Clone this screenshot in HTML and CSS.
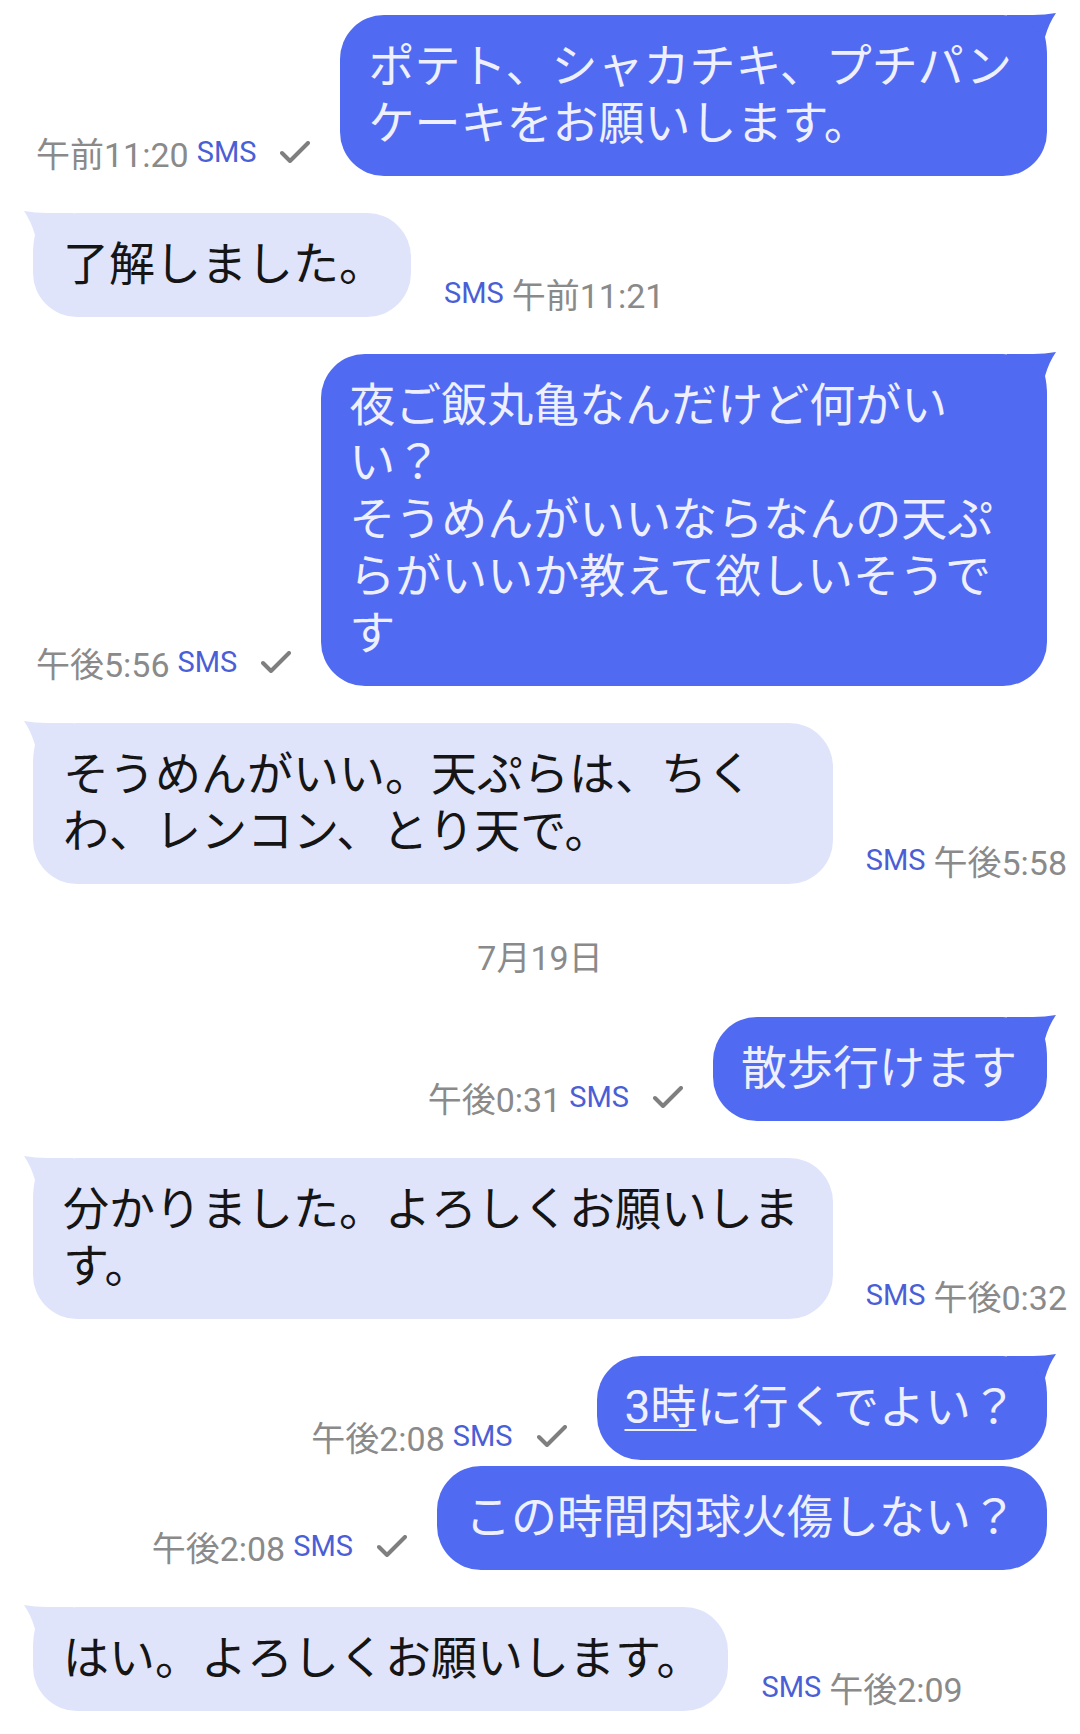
FILE: index.html
```html
<!DOCTYPE html>
<html lang="ja">
<head>
  <meta charset="UTF-8" />
  <meta name="viewport" content="width=device-width, initial-scale=1.0"/>
  <title>SMS</title>
  <link rel="stylesheet" href="styles.css">
</head>
<body>

  <div class="chat">

    <div class="row sent">
      <div class="meta"><span class="time">午前11:20</span> <span class="sms">SMS</span><svg class="check" viewBox="0 0 30 22"><polyline points="2,12 10,20 28,2" /></svg></div>
      <div class="bubble tailed">ポテト、シャカチキ、プチパンケーキをお願いします。<svg class="tail" viewBox="0 0 50 50"><path d="M0,2 L26,2 Q38,2 49,0 Q42,10 38,24 Q40,32 40,44 L40,50 L0,50 Z" /></svg></div>
    </div>

    <div class="row received">
      <div class="bubble tailed">了解しました。<svg class="tail" viewBox="0 0 50 50"><path d="M0,2 L26,2 Q38,2 49,0 Q42,10 38,24 Q40,32 40,44 L40,50 L0,50 Z" /></svg></div>
      <div class="meta"><span class="sms">SMS</span> <span class="time">午前11:21</span></div>
    </div>

    <div class="row sent">
      <div class="meta"><span class="time">午後5:56</span> <span class="sms">SMS</span><svg class="check" viewBox="0 0 30 22"><polyline points="2,12 10,20 28,2" /></svg></div>
      <div class="bubble tailed">夜ご飯丸亀なんだけど何がいい？<br>そうめんがいいならなんの天ぷらがいいか教えて欲しいそうです<svg class="tail" viewBox="0 0 50 50"><path d="M0,2 L26,2 Q38,2 49,0 Q42,10 38,24 Q40,32 40,44 L40,50 L0,50 Z" /></svg></div>
    </div>

    <div class="row received">
      <div class="bubble tailed">そうめんがいい。天ぷらは、ちくわ、レンコン、とり天で。<svg class="tail" viewBox="0 0 50 50"><path d="M0,2 L26,2 Q38,2 49,0 Q42,10 38,24 Q40,32 40,44 L40,50 L0,50 Z" /></svg></div>
      <div class="meta"><span class="sms">SMS</span> <span class="time">午後5:58</span></div>
    </div>

    <div class="date">7月19日</div>

    <div class="row sent">
      <div class="meta"><span class="time">午後0:31</span> <span class="sms">SMS</span><svg class="check" viewBox="0 0 30 22"><polyline points="2,12 10,20 28,2" /></svg></div>
      <div class="bubble tailed">散歩行けます<svg class="tail" viewBox="0 0 50 50"><path d="M0,2 L26,2 Q38,2 49,0 Q42,10 38,24 Q40,32 40,44 L40,50 L0,50 Z" /></svg></div>
    </div>

    <div class="row received">
      <div class="bubble tailed">分かりました。よろしくお願いします。<svg class="tail" viewBox="0 0 50 50"><path d="M0,2 L26,2 Q38,2 49,0 Q42,10 38,24 Q40,32 40,44 L40,50 L0,50 Z" /></svg></div>
      <div class="meta"><span class="sms">SMS</span> <span class="time">午後0:32</span></div>
    </div>

    <div class="row sent has-next">
      <div class="meta"><span class="time">午後2:08</span> <span class="sms">SMS</span><svg class="check" viewBox="0 0 30 22"><polyline points="2,12 10,20 28,2" /></svg></div>
      <div class="bubble tailed"><span class="link">3時</span>に行くでよい？<svg class="tail" viewBox="0 0 50 50"><path d="M0,2 L26,2 Q38,2 49,0 Q42,10 38,24 Q40,32 40,44 L40,50 L0,50 Z" /></svg></div>
    </div>

    <div class="row sent">
      <div class="meta"><span class="time">午後2:08</span> <span class="sms">SMS</span><svg class="check" viewBox="0 0 30 22"><polyline points="2,12 10,20 28,2" /></svg></div>
      <div class="bubble">この時間肉球火傷しない？</div>
    </div>

    <div class="row received">
      <div class="bubble tailed">はい。よろしくお願いします。<svg class="tail" viewBox="0 0 50 50"><path d="M0,2 L26,2 Q38,2 49,0 Q42,10 38,24 Q40,32 40,44 L40,50 L0,50 Z" /></svg></div>
      <div class="meta"><span class="sms">SMS</span> <span class="time">午後2:09</span></div>
    </div>

  </div>

</body>
</html>
```

FILE: styles.css
```css
body {
  margin: 0;
  background: #ffffff;
  font-family: Roboto, "Noto Sans CJK JP", sans-serif;
}

.chat {
  padding-top: 15px;
}

.row {
  display: flex;
  align-items: flex-end;
  margin-bottom: 37px;
}

.row.sent {
  justify-content: flex-end;
  padding: 0 33px 0 36px;
  gap: 30px;
}

.row.received {
  justify-content: flex-start;
  padding: 0 13px 0 33px;
  gap: 33px;
}

.row.has-next {
  margin-bottom: 6px;
}

.bubble {
  position: relative;
  flex: 0 1 auto;
  min-width: 0;
  padding: 23px 30px 24px 28px;
  border-radius: 44px;
  font-size: 46px;
  line-height: 57px;
}

.sent .bubble {
  background: #506af2;
  color: #eef0ff;
}

.received .bubble {
  background: #dfe4fb;
  color: #151515;
  padding: 23px 26px 24px 30px;
}

/* tail sits behind the bubble so it never covers the text */
.tail {
  position: absolute;
  top: -2px;
  width: 50px;
  height: 50px;
  z-index: -1;
}

.sent .tail {
  right: -10px;
  fill: #506af2;
}

.received .tail {
  left: -10px;
  fill: #dfe4fb;
  transform: scaleX(-1);
}

.link {
  text-decoration: underline;
  text-decoration-thickness: 2px;
  text-underline-offset: 6px;
}

.meta {
  flex: none;
  display: flex;
  align-items: center;
  white-space: nowrap;
  height: 40px;
  padding-bottom: 4px;
}

.time {
  font-size: 34px;
  color: #8a8a8a;
}

.sms {
  font-size: 29px;
  color: #4a5ed6;
  margin: 0 8px;
}

.received .sms {
  margin-left: 0;
}

.check {
  width: 30px;
  height: 22px;
  margin-left: 16px;
  fill: none;
  stroke: #7f7f7f;
  stroke-width: 4;
  stroke-linecap: round;
  stroke-linejoin: round;
}

.date {
  text-align: center;
  font-size: 34px;
  line-height: 40px;
  color: #8a8a8a;
  margin: 54px 0 39px;
}
```
